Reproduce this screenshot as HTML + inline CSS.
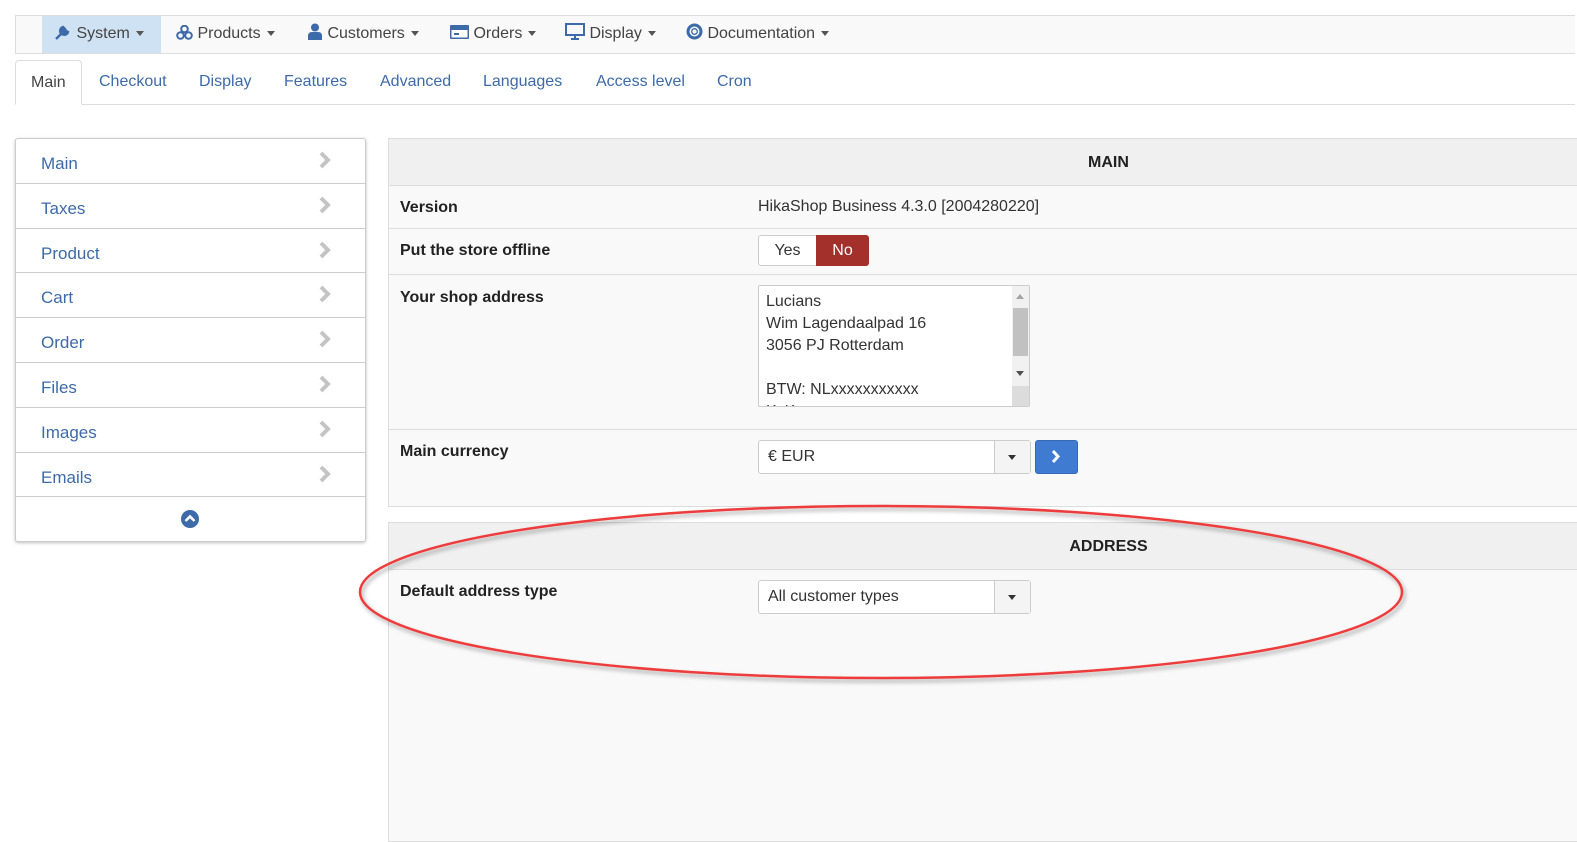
<!DOCTYPE html>
<html><head><meta charset="utf-8"><style>
*{box-sizing:border-box;margin:0;padding:0}
body{width:1577px;height:827px;background:#fff;font-family:"Liberation Sans",sans-serif;position:relative;overflow:hidden;color:#333}
.nav{position:absolute;left:15px;top:15px;width:1560px;height:39px;border:1px solid #ddd;border-right:none;background:#f9f9f9}
.nav .it{position:absolute;top:0;height:37px;line-height:35px;font-size:16px;color:#444;white-space:nowrap}
.caret{display:inline-block;width:0;height:0;border-left:4px solid transparent;border-right:4px solid transparent;border-top:5px solid #555;vertical-align:middle;margin-left:6px}
.tabs{position:absolute;left:15px;top:60px;width:1560px;height:45px;border-bottom:1px solid #ddd}
.tab{position:absolute;top:0;height:45px;line-height:44px;font-size:16px;color:#3d6aa8}
.tab.act{border:1px solid #ddd;border-bottom:1px solid #fff;border-radius:4px 4px 0 0;background:#fff;color:#444;padding:0 15px;left:0}
.side{position:absolute;left:15px;top:138px;width:351px;height:404px;border:1px solid #ccc;border-radius:3px;background:#fff;box-shadow:0 1px 3px rgba(0,0,0,.25)}
.side .r{height:44.8px;border-bottom:1px solid #ccc;font-size:17px;color:#3d6aa8;padding-left:25px;line-height:49px;position:relative}
.side .r svg{position:absolute;right:33px;top:12px}
.panel{position:absolute;left:388px;width:1440px;border:1px solid #ddd;border-right:none;background:#f9f9f9}
.ph{height:47px;background:#f0f0f0;border-bottom:1px solid #ddd;text-align:center;font-weight:bold;font-size:16px;line-height:48px;color:#222}
.row{position:relative;border-bottom:1px solid #ddd}
.lbl{position:absolute;left:11px;font-weight:bold;font-size:16px;color:#222}
.val{position:absolute;left:369px;font-size:16px;color:#333}
.sel{position:absolute;left:369px;width:273px;height:34px;border:1px solid #ccc;border-radius:3px;background:#fff;font-size:16px;line-height:32px;padding-left:9px;color:#333}
.sel .b{position:absolute;right:0;top:0;width:36px;height:32px;border-left:1px solid #ccc;background:#f4f4f4}
.sel .b i{position:absolute;left:13px;top:14px;border-left:4px solid transparent;border-right:4px solid transparent;border-top:5px solid #333}
</style></head><body>
<div class="nav">
<div class="it" style="left:26px;width:119px;background:#cfe2f3;padding-left:12px"><svg width="18" height="16" viewBox="0 0 18 16" style="vertical-align:-2px"><path d="M2 15 L10 7 M9 3 a4 4 0 1 0 5 5 l-2 -1 -1 -2 z" stroke="#3d6aa8" stroke-width="2.4" fill="#3d6aa8"/></svg> System<span class="caret"></span></div>
<div class="it" style="left:160px"><svg width="17" height="15" viewBox="0 0 17 15" style="vertical-align:-2px"><circle cx="8.5" cy="4" r="3.3" fill="none" stroke="#3d6aa8" stroke-width="2"/><circle cx="4.5" cy="10.5" r="3.3" fill="none" stroke="#3d6aa8" stroke-width="2"/><circle cx="12.5" cy="10.5" r="3.3" fill="none" stroke="#3d6aa8" stroke-width="2"/></svg> Products<span class="caret"></span></div>
<div class="it" style="left:291px"><svg width="16" height="17" viewBox="0 0 16 17" style="vertical-align:-2px"><circle cx="8" cy="4.5" r="4" fill="#3d6aa8"/><path d="M1 17 v-4 q0 -4 4 -4 h6 q4 0 4 4 v4z" fill="#3d6aa8"/></svg> Customers<span class="caret"></span></div>
<div class="it" style="left:434px"><svg width="19" height="14" viewBox="0 0 19 14" style="vertical-align:-1px"><rect x="0" y="0" width="19" height="14" rx="1" fill="#3d6aa8"/><rect x="1.5" y="5" width="16" height="7.5" fill="#fff"/><rect x="4" y="8" width="5" height="2" fill="#3d6aa8"/></svg> Orders<span class="caret"></span></div>
<div class="it" style="left:549px"><svg width="20" height="17" viewBox="0 0 20 17" style="vertical-align:-2px"><rect x="1" y="1" width="18" height="11" fill="none" stroke="#3d6aa8" stroke-width="2"/><path d="M6 16 h8 M10 12 v4" stroke="#3d6aa8" stroke-width="2"/></svg> Display<span class="caret"></span></div>
<div class="it" style="left:670px"><svg width="17" height="17" viewBox="0 0 17 17" style="vertical-align:-2px"><circle cx="8.5" cy="8.5" r="6.5" fill="none" stroke="#3d6aa8" stroke-width="3"/><circle cx="8.5" cy="8.5" r="2.8" fill="none" stroke="#3d6aa8" stroke-width="1.3"/></svg> Documentation<span class="caret"></span></div>
</div>
<div class="tabs">
<div class="tab act">Main</div>
<div class="tab" style="left:84px">Checkout</div>
<div class="tab" style="left:184px">Display</div>
<div class="tab" style="left:269px">Features</div>
<div class="tab" style="left:365px">Advanced</div>
<div class="tab" style="left:468px">Languages</div>
<div class="tab" style="left:581px">Access level</div>
<div class="tab" style="left:702px">Cron</div>
</div>
<div class="side">
<div class="r">Main<svg width="14" height="18"><path d="M3 2 L10 9 L3 16" stroke="#c4c4c4" stroke-width="4" fill="none"/></svg></div>
<div class="r">Taxes<svg width="14" height="18"><path d="M3 2 L10 9 L3 16" stroke="#c4c4c4" stroke-width="4" fill="none"/></svg></div>
<div class="r">Product<svg width="14" height="18"><path d="M3 2 L10 9 L3 16" stroke="#c4c4c4" stroke-width="4" fill="none"/></svg></div>
<div class="r">Cart<svg width="14" height="18"><path d="M3 2 L10 9 L3 16" stroke="#c4c4c4" stroke-width="4" fill="none"/></svg></div>
<div class="r">Order<svg width="14" height="18"><path d="M3 2 L10 9 L3 16" stroke="#c4c4c4" stroke-width="4" fill="none"/></svg></div>
<div class="r">Files<svg width="14" height="18"><path d="M3 2 L10 9 L3 16" stroke="#c4c4c4" stroke-width="4" fill="none"/></svg></div>
<div class="r">Images<svg width="14" height="18"><path d="M3 2 L10 9 L3 16" stroke="#c4c4c4" stroke-width="4" fill="none"/></svg></div>
<div class="r">Emails<svg width="14" height="18"><path d="M3 2 L10 9 L3 16" stroke="#c4c4c4" stroke-width="4" fill="none"/></svg></div>
<svg width="18" height="18" style="position:absolute;left:165px;top:371px"><circle cx="9" cy="9" r="9" fill="#3d6aa8"/><path d="M4.5 11 L9 6.5 L13.5 11" stroke="#fff" stroke-width="2.6" fill="none"/></svg>
</div>
<div class="panel" style="top:138px;height:369px">
<div class="ph">MAIN</div>
<div class="row" style="height:43px"><div class="lbl" style="top:13px">Version</div><div class="val" style="top:12px">HikaShop Business 4.3.0 [2004280220]</div></div>
<div class="row" style="height:46px">
<div class="lbl" style="top:13px">Put the store offline</div>
<div style="position:absolute;left:369px;top:6px;width:110px;height:31px;border:1px solid #ccc;border-radius:3px;background:#fff;font-size:16px;line-height:29px">
<span style="position:absolute;left:0;width:57px;text-align:center">Yes</span>
<span style="position:absolute;left:57px;top:-1px;width:53px;height:31px;background:#a3302a;color:#fff;text-align:center;border-radius:0 3px 3px 0;line-height:31px">No</span></div>
</div>
<div class="row" style="height:155px">
<div class="lbl" style="top:14px">Your shop address</div>
<div style="position:absolute;left:369px;top:10px;width:272px;height:122px;border:1px solid #ccc;border-radius:2px;background:#fff;overflow:hidden;font-size:16px;line-height:22px;padding:5px 7px;color:#333">Lucians<br>Wim Lagendaalpad 16<br>3056 PJ Rotterdam<br><br>BTW: NLxxxxxxxxxxx<br>KvK
<div style="position:absolute;right:0;top:0;width:17px;height:120px;background:#f1f1f1"><div style="position:absolute;left:1px;top:22px;width:15px;height:48px;background:#c1c1c1"></div><div style="position:absolute;left:4px;top:8px;border-left:4px solid transparent;border-right:4px solid transparent;border-bottom:5px solid #a3a3a3"></div><div style="position:absolute;left:4px;top:85px;border-left:4px solid transparent;border-right:4px solid transparent;border-top:5px solid #505050"></div><div style="position:absolute;left:0;top:100px;width:17px;height:20px;background:#dcdcdc"></div></div></div>
</div>
<div class="row" style="border:none">
<div class="lbl" style="top:13px">Main currency</div>
<div class="sel" style="top:10px">€ EUR<div class="b"><i></i></div></div>
<div style="position:absolute;left:646px;top:10px;width:43px;height:34px;background:#3f7bd0;border:1px solid #3569b5;border-radius:3px"><svg width="43" height="34" style="position:absolute;left:-1px;top:-1px"><path d="M18 11 L23 16.5 L18 22" stroke="#fff" stroke-width="3" fill="none"/></svg></div>
</div>
</div>
<div class="panel" style="top:522px;height:320px">
<div class="ph">ADDRESS</div>
<div class="lbl" style="top:60px">Default address type</div>
<div class="sel" style="top:57px">All customer types<div class="b"><i></i></div></div>
</div>
<svg width="1577" height="827" style="position:absolute;left:0;top:0"><defs><filter id="s"><feDropShadow dx="2" dy="3" stdDeviation="2" flood-color="#000" flood-opacity=".35"/></filter></defs><ellipse cx="881" cy="592" rx="521" ry="86" fill="none" stroke="#ee3b3b" stroke-width="2.5" filter="url(#s)"/></svg>
</body></html>
